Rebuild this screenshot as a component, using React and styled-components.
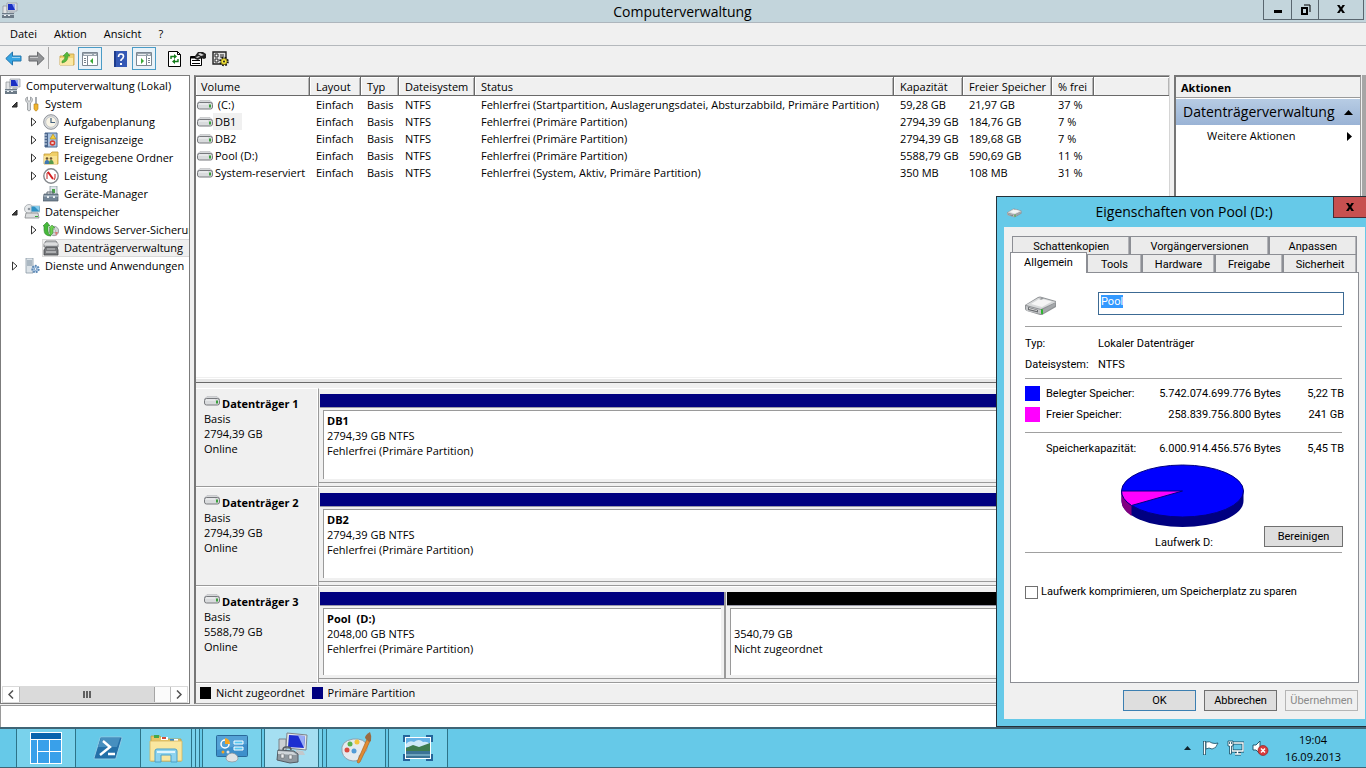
import React, { useEffect, useRef } from "react";
import styled, { createGlobalStyle, css } from "styled-components";

const UI_FONT = '"Open Sans", "Noto Sans", sans-serif';
const DIALOG_FONT = 'Roboto, "Liberation Sans", Arial, sans-serif';

const GlobalStyle = createGlobalStyle`
  *, *::before, *::after { box-sizing: border-box; }
  body { margin: 0; background: #66c9e8; color: #000; font: 11px/18px ${UI_FONT}; }
  button, input { font: inherit; color: inherit; }
  svg { display: block; flex: none; }
`;

/* ---------- frame ---------- */

const Desktop = styled.div`
  position: relative;
  display: flex;
  flex-direction: column;
  min-height: 100vh;
  overflow: hidden;
`;

const PlainButton = styled.button`
  display: flex;
  align-items: center;
  justify-content: center;
  margin: 0;
  padding: 0;
  border: 0;
  background: none;
`;

const TitleBar = styled.header`
  display: flex;
  justify-content: space-between;
  height: 23px;
  padding-left: 2px;
  background: #c3d5dc;
  border-bottom: 1px solid #aeb6bd;
`;

const TitleIcon = styled.span`
  padding-top: 2px;
`;

const WindowTitle = styled.h1`
  flex: 1;
  margin: 0;
  padding-left: 84px;
  text-align: center;
  font-size: 14px;
  line-height: 24px;
  font-weight: 400;
`;

const CaptionButtons = styled.div`
  display: flex;
  height: 20px;
  margin-right: 2px;
  border: 1px solid #59666f;
  border-top: 0;
`;

const CaptionButton = styled(PlainButton)`
  width: ${(p) => (p.$wide ? 45 : 27)}px;
  padding-bottom: 1px;
  & + & { border-left: 1px solid #59666f; }
`;

const MenuBar = styled.nav`
  display: flex;
  gap: 17px;
  height: 23px;
  padding-left: 10px;
  background: #f0f0f0;
  border-bottom: 1px solid #b4b8bc;
`;

const ToolBar = styled.div`
  display: flex;
  align-items: flex-start;
  height: 29px;
  padding: 1px 0 0 2px;
  background: #f0f0f0;
`;

const ToolButton = styled(PlainButton)`
  width: 23px;
  height: 23px;
  ${(p) =>
    p.$on &&
    css`
      background: #e9f2f8;
      border: 1px solid #4a9bc6;
      width: 24px;
    `}
`;

const ToolSeparator = styled.span`
  width: 7px;
  height: 22px;
  border-left: 1px solid ${(p) => (p.$line ? "#a8a8a8" : "transparent")};
`;

const Workspace = styled.main`
  flex: 1;
  display: grid;
  grid-template-columns: 190px minmax(0, 1fr) 192px;
  column-gap: 4px;
  padding-bottom: 1px;
  background: #f0f0f0;
`;

const StatusStrip = styled.div`
  height: 22px;
  background: #fff;
  border-top: 1px solid #9a9a9a;
  border-left: 1px solid #9a9a9a;
`;

/* ---------- tree ---------- */

const TreePane = styled.aside`
  display: flex;
  flex-direction: column;
  min-width: 0;
  background: #fff;
  border: 1px solid #7c7c7c;
  overflow: hidden;
`;

const Tree = styled.ul`
  flex: 1;
  margin: 0;
  padding: 1px 0 0;
  list-style: none;
`;

const TreeRow = styled.li`
  display: flex;
  align-items: center;
  height: 18px;
  padding-left: ${(p) => [4, 8, 27][p.$level]}px;
  white-space: nowrap;
`;

const Toggle = styled(PlainButton)`
  flex: none;
  width: 12px;
  height: 16px;
  margin-right: 3px;
`;

const TreeLabel = styled(PlainButton)`
  flex: 1;
  min-width: 0;
  justify-content: flex-start;
  gap: 5px;
  height: 18px;
  line-height: 18px;
  ${(p) =>
    p.$selected &&
    css`
      background: #efefef;
      border: 1px solid #d9d9d9;
      border-right: 0;
      margin-left: -1px;
    `}
`;

const ScrollBar = styled.div`
  display: flex;
  height: 17px;
  margin: 0 1px;
  border: 1px solid #dadada;
  background: #fbfbfb;
`;

const ScrollEnd = styled(PlainButton)`
  width: 16px;
  background: #fff;
`;

const ScrollTrack = styled.div`
  flex: 1;
  border: solid #bdbdbd;
  border-width: 0 1px;
`;

const ScrollThumb = styled(PlainButton)`
  width: 90%;
  height: 15px;
  background: #dadada;
  border-right: 1px solid #a5a5a5;
`;

/* ---------- volume list ---------- */

const CenterPane = styled.section`
  display: flex;
  flex-direction: column;
  min-width: 0;
  background: #f0f0f0;
  border: 1px solid #9a9a9a;
  border-right-color: #d5d5d5;
  border-left: 2px solid #767676;
`;

const VolumeArea = styled.div`
  height: 301px;
  background: #fff;
  border-top: 1px solid #696969;
`;

const VolumeTable = styled.table`
  width: 100%;
  table-layout: fixed;
  border-collapse: separate;
  border-spacing: 0;
  white-space: nowrap;
  th {
    height: 19px;
    padding: 1px 0 0 6px;
    text-align: left;
    font-weight: 400;
    line-height: 17px;
    background: #f0f0f0;
    border-right: 1px solid #696969;
    border-bottom: 1px solid #696969;
    box-shadow: inset 1px 1px #fff, inset -1px 0 #b5b5b5;
  }
  th:first-child { padding-left: 5px; }
  th:last-child { border-right: 0; }
  td { height: 17px; padding: 0 0 0 6px; line-height: 17px; }
  td:first-child { padding-left: 1px; }
`;

const VolumeName = styled.span`
  display: flex;
  align-items: center;
`;

const NameText = styled.span`
  height: 17px;
  padding: 0 6px 0 2px;
  white-space: pre;
  background: ${(p) => (p.$active ? "#f0f0f0" : "transparent")};
`;

const Splitter = styled.div`
  height: 5px;
  margin-top: 1px;
  border-top: 1px solid #fff;
  border-bottom: 1px solid #696969;
  background: #e6e6e6;
`;

/* ---------- disk map ---------- */

const DiskMap = styled.div`
  flex: 1;
  padding-top: 5px;
`;

const DiskRow = styled.div`
  display: grid;
  grid-template-columns: 122px minmax(0, 1fr);
  height: 99px;
  line-height: 15px;
  &:last-child { height: 97px; }
`;

const DiskInfo = styled.div`
  padding: 7px 0 0 8px;
  border-top: 1px solid #fff;
  border-bottom: 1px solid #9a9a9a;
  border-right: 1px solid #fff;
`;

const DiskTitle = styled.div`
  display: flex;
  gap: 2px;
  font-weight: 700;
`;

const Partitions = styled.div`
  display: grid;
  grid-template-columns: ${(p) => p.$columns};
  border-top: 1px solid #fff;
  border-left: 1px solid #9a9a9a;
  border-bottom: 1px solid #9a9a9a;
  padding: 5px 0 3px;
`;

const Partition = styled.div`
  display: flex;
  flex-direction: column;
  padding-left: 1px;
  border-bottom: 1px solid #9a9a9a;
  & + & { border-left: 2px solid #9a9a9a; }
`;

const PartitionBar = styled.div`
  height: 14px;
  background: ${(p) => (p.$free ? "#000" : "#000080")};
  border-bottom: 1px solid #9a9aa8;
`;

const PartitionBox = styled.div`
  flex: 1;
  margin: 2px 3px 3px 3px;
  padding: 2px 0 0 3px;
  background: #fff;
  border-top: 1px solid #9a9a9a;
  border-left: 1px solid #9a9a9a;
  white-space: pre-line;
  strong { display: block; min-height: 15px; white-space: pre; }
`;

const Legend = styled.div`
  display: flex;
  align-items: center;
  gap: 7px;
  height: 20px;
  padding: 0 0 2px 4px;
  border-top: 1px solid #fff;
`;

const LegendItem = styled.span`
  display: flex;
  align-items: center;
  gap: 5px;
  &::before {
    content: "";
    width: 11px;
    height: 12px;
    background: ${(p) => (p.$free ? "#000" : "#000080")};
  }
`;

/* ---------- actions ---------- */

const ActionsFrame = styled.aside`
  border-right: 4px solid #a6a6a6;
  background: #f0f0f0;
`;

const ActionsPane = styled.div`
  height: 100%;
  margin-right: 1px;
  background: #fff;
  border: 1px solid #9a9a9a;
  border-top: 2px solid #767676;
  border-left: 2px solid #767676;
`;

const ActionsHeading = styled.h2`
  margin: 0;
  height: 21px;
  padding: 2px 0 0 5px;
  background: #f0f0f0;
  border-bottom: 1px solid #9a9a9a;
  font-size: 11px;
  line-height: 18px;
`;

const ActionGroup = styled(PlainButton)`
  width: 100%;
  height: 26px;
  margin-top: 1px;
  justify-content: space-between;
  padding: 0 7px;
  background: linear-gradient(#b7cce4, #9ab3d5);
  font-size: 14px;
`;

const ActionItem = styled(PlainButton)`
  width: 100%;
  height: 24px;
  justify-content: space-between;
  padding: 0 8px 2px 31px;
`;

/* ---------- dialog ---------- */

const Dialog = styled.section`
  position: absolute;
  right: 0;
  bottom: 41px;
  width: 370px;
  padding: 0 1px 7px 7px;
  background: #66c9e8;
  border: 1px solid #24313a;
  border-right: 0;
  font: 11px/14px ${DIALOG_FONT};
`;

const DialogTitle = styled.div`
  display: flex;
  align-items: flex-start;
  height: 30px;
  margin-right: -1px;
  svg { margin: 11px 0 0 3px; }
  h2 {
    flex: 1;
    margin: 0;
    padding-left: 13px;
    text-align: center;
    font: 14px/30px ${UI_FONT};
  }
`;

const CloseButton = styled(PlainButton)`
  width: 33px;
  height: 21px;
  background: #c75050;
  border: 1px solid #4b2a35;
  border-top: 0;
  border-right: 0;
  && svg { margin: 0; }
`;

const DialogBody = styled.div`
  padding: 9px 6px 8px;
  background: #f0f0f0;
`;

const TabRow = styled.div`
  display: grid;
  grid-template-columns: ${(p) => p.$columns};
  height: 18px;
  margin: 0 2px 0 ${(p) => (p.$front ? 0 : 2)}px;
`;

const Tab = styled(PlainButton)`
  position: relative;
  height: 18px;
  padding-top: 2px;
  background: #ebebeb;
  border: 1px solid #8c8e94;
  border-bottom: 0;
  box-shadow: inset -1px 0 #b2b3b7;
  ${(p) =>
    p.$selected &&
    css`
      z-index: 1;
      height: 21px;
      margin-top: -2px;
      padding: 0 0 1px;
      background: #fff;
      box-shadow: none;
    `}
`;

const TabPanel = styled.div`
  height: 411px;
  padding: 19px 14px 0;
  background: #fff;
  border: 1px solid #8c8e94;
`;

const Divider = styled.hr`
  margin: 0 2px 0 0;
  border: 0;
  border-top: 1px solid #a0a0a0;
`;

const NameRow = styled.label`
  display: grid;
  grid-template-columns: 73px 1fr;
  height: 34px;
  svg { margin-top: 4px; }
`;

const NameInput = styled.input`
  height: 23px;
  padding: 0 2px 4px;
  border: 1px solid #3c6a94;
  border-radius: 0;
  outline: 0;
  background: #fff;
  font-size: 11px;
  &::selection { background: #3399ff; color: #fff; }
`;

const Facts = styled.dl`
  display: grid;
  grid-template-columns: 73px 1fr;
  grid-auto-rows: 21px;
  align-items: center;
  margin: 0;
  padding: 6px 0 3px;
  dt, dd { margin: 0; }
`;

const UsageTable = styled.table`
  width: 100%;
  border-collapse: collapse;
  table-layout: fixed;
  margin: ${(p) => (p.$total ? "5px 0 5px" : "4px 0 7px")};
  th, td { height: 21px; padding: 0; font-weight: 400; }
  th { text-align: left; }
  td { text-align: right; white-space: nowrap; }
`;

const Swatch = styled.span`
  display: block;
  width: 15px;
  height: 15px;
  background: ${(p) => p.$color};
`;

const ChartRow = styled.div`
  display: grid;
  grid-template-columns: 95px 128px 1fr;
  align-items: end;
  height: 88px;
  padding: 0 1px 7px 0;
`;

const Chart = styled.figure`
  margin: 0 0 -3px;
  figcaption { margin-top: 8px; text-align: center; }
`;

const PushButton = styled(PlainButton)`
  height: 21px;
  width: ${(p) => p.$width || 73}px;
  background: #dedede;
  border: 1px solid #707070;
  ${(p) => p.$default && "border-color: #3c7fb1;"}
  &:disabled { color: #8a8a8a; background: #f0f0f0; border-color: #b5b5b5; }
`;

const CleanButton = styled(PushButton)`
  justify-self: end;
`;

const CheckLabel = styled.label`
  display: flex;
  align-items: center;
  gap: 3px;
  padding-top: 32px;
  input {
    appearance: none;
    width: 13px;
    height: 13px;
    margin: 0;
    border: 1px solid #707070;
    background: #fff;
  }
`;

const DialogButtons = styled.div`
  display: flex;
  justify-content: flex-end;
  gap: 8px;
  padding: 7px 1px 0 0;
`;

/* ---------- task bar ---------- */

const TaskBar = styled.footer`
  display: flex;
  height: 41px;
  padding-left: 16px;
  background: #66c9e8;
  border-top: 2px solid #3f6576;
  border-bottom: 1px solid #3f6576;
`;

const TaskButton = styled(PlainButton)`
  width: ${(p) => p.$width}px;
  margin-right: ${(p) => p.$after || 0}px;
  border: solid #2d7388;
  border-width: 0 1px;
  background: ${(p) => (p.$active ? "#a5dff2" : p.$plain ? "transparent" : "#79d2ec")};
  & + & { margin-left: -1px; }
  ${(p) =>
    p.$stack &&
    css`
      box-shadow: 3px 0 #79d2ec, 4px 0 #2d7388;
    `}
  ${(p) =>
    p.$stack === 2 &&
    css`
      box-shadow: 3px 0 #79d2ec, 4px 0 #2d7388, 7px 0 #79d2ec, 8px 0 #2d7388;
    `}
`;

const Tray = styled.div`
  display: flex;
  align-items: center;
  gap: 8px;
  margin-left: auto;
  padding-right: 25px;
`;

const TrayArrow = styled.svg`
  margin-right: 4px;
`;

const Clock = styled.time`
  margin-left: 8px;
  line-height: 17px;
  text-align: center;
`;

/* ---------- icons ---------- */

const ComputerIcon = () => (
  <svg width="16" height="16" viewBox="0 0 16 16">
    <path d="M1 4h4v8H1z" fill="#e2e4e6" stroke="#8a8f94" strokeWidth=".7" />
    <path d="M5 1h10v8H5z" fill="#dde1e6" stroke="#949aa2" strokeWidth=".7" />
    <path d="M6 2h7v6H6z" fill="#1a2fc4" />
    <path d="M10 2h3v6z" fill="#8fa2f0" />
    <path d="M8 9h4l1 2H7z" fill="#b7bcc2" />
    <path d="M0 11h12v5H0z" fill="#6d7b88" />
    <path d="M0 12.500h12" stroke="#b9c5cf" />
    <path d="M2 13h2v1H2zM6 13h2v1H6z" fill="#eef2f5" />
  </svg>
);

const DriveIcon = () => (
  <svg width="16" height="10" viewBox="0 0 16 10">
    <path d="M3 .5h10l2.500 2.500H.5z" fill="#d5d7d9" stroke="#b8babd" strokeWidth=".6" />
    <rect x=".5" y="2.500" width="15" height="6.500" rx="2" fill="#d9dbdd" stroke="#77797d" />
    <path d="M2 4h9" stroke="#f4f5f6" />
    <path d="M12 4.500h2v3h-2z" fill="#3aa03c" />
  </svg>
);

const LargeDriveIcon = ({ width = 32, height = 20 }) => (
  <svg width={width} height={height} viewBox="0 0 32 20">
    <path d="M0 9 13 1q2-1 4 0l14 4v6l-14 8h-2L2 15q-2-1-2-2z" fill="#8f9295" />
    <path d="M1 9 13 2q2-1 4 0l14 4-15 7z" fill="#d6d8d9" />
    <path d="M6 8 15 2.500l12 3L17 11z" fill="#f5f5f5" />
    <path d="m14 3 3-1 2 .7-3 1z" fill="#8b8e91" />
    <path d="m1 10 15 4v4L2 15q-1-1-1-2z" fill="#c4c6c8" />
    <path d="m3 11 10 3v2.500L3 14z" fill="#6a6d70" />
    <path d="m4 12 8 2.300v.7L4 13z" fill="#e6e6e6" />
    <path d="m17 14 13-7v3l-13 8z" fill="#a4a7aa" />
    <path d="m16 13 2 .5v5l-2-1z" fill="#2fb52f" />
  </svg>
);

const ToolsIcon = () => (
  <svg width="16" height="16" viewBox="0 0 16 16">
    <path d="M3.500 1v3L5 5.500 6.500 4V1c3 1 2 5 0 6v7q-1.500 2-3 0V7C1.500 6 .5 2 3.500 1z" fill="#d5d8da" stroke="#84888c" strokeWidth=".7" />
    <path d="M11 1h2v7h-2z" fill="#a7abb0" />
    <path d="M10 8h4v5q-2 4-4 0z" fill="#f0b530" stroke="#b57d12" strokeWidth=".6" />
  </svg>
);

const ClockIcon = () => (
  <svg width="16" height="16" viewBox="0 0 16 16">
    <circle cx="8" cy="8" r="7.300" fill="#dcdee0" stroke="#8e9297" />
    <circle cx="8" cy="8" r="5.300" fill="#f8f4e6" stroke="#b5b9be" strokeWidth=".7" />
    <path d="M8 4v4.500h4" fill="none" stroke="#47627e" strokeWidth="1.200" />
  </svg>
);

const EventIcon = () => (
  <svg width="16" height="16" viewBox="0 0 16 16">
    <path d="M2 1h12v14H2z" fill="#a9c3e2" stroke="#4a6a94" />
    <path d="M2 1h3v14H2z" fill="#49658c" />
    <path d="M1 3h3M1 6h3M1 9h3M1 12h3" stroke="#dbe4ef" />
    <path d="m10 2 3 5H7z" fill="#f4cf3c" stroke="#af8a17" strokeWidth=".6" />
    <circle cx="9.500" cy="11" r="2.800" fill="#d43c33" />
    <path d="m8.500 10 2 2m0-2-2 2" stroke="#fff" />
  </svg>
);

const SharedFolderIcon = () => (
  <svg width="16" height="16" viewBox="0 0 16 16">
    <path d="M1 4h6l2-2h6v12H1z" fill="#f0cf68" stroke="#c39a36" strokeWidth=".8" />
    <path d="M1 6h13v8H1z" fill="#f9e394" />
    <circle cx="4" cy="8.500" r="1.300" fill="#6e5636" />
    <circle cx="8" cy="8.500" r="1.300" fill="#6e5636" />
    <path d="M1.500 14q0-4 2.500-4t2.500 4z" fill="#4078b2" />
    <path d="M5.800 14q0-4 2.400-4t2.500 4z" fill="#579a4e" />
  </svg>
);

const PerformanceIcon = () => (
  <svg width="16" height="16" viewBox="0 0 16 16">
    <circle cx="8" cy="8" r="7.200" fill="#fff" stroke="#84888c" strokeWidth="1.400" />
    <path d="M4 11V5l2-1M11 12l1-2V6" fill="none" stroke="#c02222" />
    <path d="m5 4 5 7" stroke="#d51f1f" strokeWidth="2" />
  </svg>
);

const DeviceIcon = () => (
  <svg width="16" height="16" viewBox="0 0 16 16">
    <path d="M7 0h7v9H7z" fill="#dfe6ea" stroke="#7f8c96" strokeWidth=".7" />
    <path d="M9 3h3v4H9z" fill="#49a44a" />
    <path d="M4 8V6h6v2" fill="none" stroke="#616b74" />
    <path d="M1 8h14v7H0z" fill="#738596" stroke="#4c5964" strokeWidth=".7" />
    <path d="M1 10h14" stroke="#c3ced7" />
    <path d="M4 10h2v2H4zM10 10h2v2h-2z" fill="#e9eef1" />
  </svg>
);

const StorageIcon = () => (
  <svg width="16" height="16" viewBox="0 0 16 16">
    <circle cx="5" cy="5" r="4.500" fill="#e6e9eb" stroke="#979ca1" strokeWidth=".7" />
    <circle cx="5" cy="5" r="1.300" fill="#8f979e" />
    <path d="M7 2h9v6H7z" fill="#2e92c5" stroke="#bcc7cd" />
    <path d="m10 2 5 5V2z" fill="#88ccec" />
    <path d="M2 9h12l1 5H1z" fill="#dcdedf" stroke="#838689" strokeWidth=".8" />
    <path d="M11 12h3v1h-3z" fill="#37a637" />
  </svg>
);

const BackupIcon = () => (
  <svg width="16" height="16" viewBox="0 0 16 16">
    <circle cx="11" cy="9" r="4.700" fill="#d1d4d6" stroke="#7f8387" strokeWidth=".7" />
    <circle cx="11" cy="9" r="1.400" fill="#fff" stroke="#777" strokeWidth=".5" />
    <path d="M12 10h3l-2 4z" fill="#d87976" />
    <path d="m4 0 3 4H5v5q0 3 3 5-7 0-7-6V4H0z" fill="#46b93a" stroke="#2d852b" strokeWidth=".6" />
    <path d="m9 3 3 3h-2v4q0 2-3 4V6H6z" fill="#6dcf4f" stroke="#2d852b" strokeWidth=".5" />
  </svg>
);

const DiskManagerIcon = () => (
  <svg width="16" height="16" viewBox="0 0 16 16">
    <path d="M3 1h10l2 3v3H1V4z" fill="#c6c8ca" stroke="#6d6f72" strokeWidth=".8" />
    <path d="M1 4h14" stroke="#f2f2f2" />
    <path d="M3 7h11l1 3v5H1v-5z" fill="#77797c" stroke="#45474a" strokeWidth=".8" />
    <path d="M3 12h10" stroke="#e6e7e8" />
    <path d="M4 9h8" stroke="#c7c8c9" />
  </svg>
);

const ServicesIcon = () => (
  <svg width="16" height="16" viewBox="0 0 16 16">
    <path d="M2 0h7v15H2z" fill="#dce3e8" stroke="#8c9aa6" strokeWidth=".8" />
    <path d="M3 3h5M3 5h5M3 7h5" stroke="#7b8d9d" />
    <circle cx="11.500" cy="11" r="3.200" fill="#b6d0ea" stroke="#5c87b4" strokeWidth="2" strokeDasharray="1.800 1" />
    <circle cx="11.500" cy="11" r="1.300" fill="#fff" stroke="#5c87b4" strokeWidth=".7" />
  </svg>
);

const Arrow = ({ flip, fill, stroke }) => (
  <svg width="17" height="15" viewBox="0 0 17 15">
    <path d="M.8 7.500 7.500 1v4h8.500v5H7.500v4z" transform={flip ? "rotate(180 8.500 7.500)" : undefined} fill={fill} stroke={stroke} />
    <path d="M7 6.500h8" transform={flip ? "translate(-5)" : undefined} stroke="#fff" opacity=".5" />
  </svg>
);

const FolderUpIcon = () => (
  <svg width="16" height="16" viewBox="0 0 16 16">
    <path d="M1 5h7l2-2h5v11H1z" fill="#f1d272" stroke="#c9a548" strokeWidth=".9" />
    <path d="M1 7h13v7H1z" fill="#fbe9a5" />
    <path d="M3 10q3-1 3-5H4l4-4 3 4H9q0 6-6 7z" fill="#54b83b" stroke="#3a8a2a" strokeWidth=".5" />
  </svg>
);

const PaneIcon = ({ right }) => (
  <svg width="16" height="14" viewBox="0 0 16 14">
    <path d="M.5.5h15v13H.5z" fill="#fff" stroke="#7c8791" />
    <path d="M1 1h14v3H1z" fill="#9aa5ae" />
    <path d="M2 2.500h8M12 2.500h2" stroke="#e6eaed" />
    <path d={right ? "M10.500 4v9" : "M5.500 4v9"} stroke="#7c8791" />
    <path d={right ? "M12 6.500h2M12 8.500h2M12 10.500h2" : "M2 6.500h2M2 8.500h2M2 10.500h2"} stroke="#78838c" />
    <path d={right ? "m5 6 3 3-3 3z" : "m11 6-3 3 3 3z"} fill="#39a935" />
  </svg>
);

const HelpIcon = () => (
  <svg width="13" height="16" viewBox="0 0 13 16">
    <path d="M0 0h13v16H0z" fill="#3458b5" />
    <path d="M0 0h2v16H0z" fill="#1e3c8c" />
    <path d="M4.500 6q0-3 2.500-3t2.500 2.500Q9.500 7 7 9v1" fill="none" stroke="#fff" strokeWidth="1.600" />
    <path d="M6 12h2v2H6z" fill="#fff" />
  </svg>
);

const RefreshIcon = () => (
  <svg width="13" height="16" viewBox="0 0 13 16">
    <path d="M.5.5h9l3 3v12H.5z" fill="#fff" stroke="#000" />
    <path d="M9.500.5v3h3" fill="none" stroke="#000" />
    <path d="M3 8V5.500h4M10 8v2.500H6" fill="none" stroke="#137c1a" strokeWidth="1.400" />
    <path d="m6 3 3 2.500L6 8zM7 8l-3 2.500L7 13z" fill="#137c1a" />
  </svg>
);

const PropertiesIcon = () => (
  <svg width="16" height="16" viewBox="0 0 16 16">
    <path d="M.5 5.500h11v9H.5z" fill="#fff" stroke="#000" />
    <path d="M1 6h10v1H1zM2 9.500h8M2 12.500h8" fill="#000" stroke="#000" />
    <path d="M5 5 8 1h5l3 2v4l-2 1-3-1-3 2-3-1z" fill="#222" />
    <path d="m8 3 2-1 4 2-3 1zM6 6l3-1 1 1-3 1z" fill="#d8d8d8" />
  </svg>
);

const SettingsIcon = () => (
  <svg width="17" height="16" viewBox="0 0 17 16">
    <path d="M1 1h13v12H1z" fill="#e2e2e2" stroke="#222" strokeWidth="1.400" />
    <path d="M3 3h3v3H3zM3 8h3v3H3z" fill="#fff" stroke="#222" />
    <path d="M8 4h4M8 6h4" stroke="#222" />
    <circle cx="12" cy="10.500" r="3.800" fill="none" stroke="#111" strokeWidth="2" strokeDasharray="1.600 1.400" />
    <circle cx="12" cy="10.500" r="3" fill="#f3e43c" stroke="#756a00" strokeWidth=".7" />
    <circle cx="12" cy="10.500" r="1" fill="#222" />
  </svg>
);

const StartIcon = () => (
  <svg width="32" height="32" viewBox="0 0 32 32" shapeRendering="crispEdges">
    <path d="M.5.5h31v31H.5z" fill="#39a0ea" stroke="#fff" />
    <path d="M1 1h30v6H1z" fill="#0a64ad" />
    <path d="M1 7.500h30M7.500 8v24M19.500 8v24M8 19.500h24" stroke="#fff" />
  </svg>
);

const ShellIcon = () => (
  <svg width="30" height="24" viewBox="0 0 30 24">
    <path d="M8 1h20q1 0 1 1l-6 20q0 1-1 1H2q-1 0-1-1L7 2q0-1 1-1z" fill="#2470a8" stroke="#8fcbe6" />
    <path d="M8 2h19l-3 9H5z" fill="#5da4cf" opacity=".6" />
    <path d="m10 5 7 6-10 8M15 18h7" fill="none" stroke="#fff" strokeWidth="2.400" />
  </svg>
);

const ExplorerIcon = () => (
  <svg width="34" height="32" viewBox="0 0 34 32">
    <path d="M2 4h9l2 3h19v22H2z" fill="#e8c667" stroke="#b99a42" strokeWidth=".8" />
    <path d="M5 3h5v3H5z" fill="#42a84b" />
    <path d="M12 5h7v3h-7z" fill="#fff" />
    <path d="M13 5h4v2h-4z" fill="#d14d3c" />
    <path d="M21 7h8v3h-8z" fill="#fff" />
    <path d="M21 7h4v2h-4z" fill="#3489c9" />
    <path d="M1 9h32v20H1z" fill="#f9e7a0" stroke="#d4b55d" strokeWidth=".8" />
    <path d="M6 30V19q0-2 2-2h18q2 0 2 2v11h-6v-7H12v7z" fill="#8ed3ee" stroke="#4ba1c9" />
    <path d="M8 20h18" stroke="#dff5fd" strokeWidth="2" />
  </svg>
);

const ControlIcon = () => (
  <svg width="32" height="30" viewBox="0 0 32 30">
    <rect x=".5" y="2.500" width="31" height="21" rx="1" fill="#3d8fcb" stroke="#2a6a9b" />
    <path d="M1 3h30v8L1 17z" fill="#68b2e2" opacity=".55" />
    <circle cx="9" cy="11" r="4" fill="none" stroke="#fff" strokeWidth="1.500" />
    <path d="M9 11V5a6 6 0 0 1 5 6z" fill="#f5a623" />
    <path d="M18 8h9v3h-9zM18 14h9v3h-9z" fill="#55c4f0" stroke="#fff" />
    <circle cx="7" cy="19" r="1.500" fill="#f5a623" />
    <circle cx="12" cy="19" r="1.500" fill="#e0e7ec" />
    <path d="M10 26q0-5 6-6 6 1 6 6-1 3-6 3t-6-3z" fill="#dfe2e4" stroke="#8b9196" strokeWidth=".7" />
  </svg>
);

const ManagementIcon = () => (
  <svg width="32" height="32" viewBox="0 0 32 32">
    <path d="M3 7h7v14H3z" fill="#cbd0d4" stroke="#798087" />
    <path d="m11 1 20 2-1 15-20-2z" fill="#e5e8eb" stroke="#7d838a" />
    <path d="m13 3 16 1-1 12-16-1z" fill="#1c2fd0" />
    <path d="m22 3.600 7 .4-1 12z" fill="#98acf5" />
    <path d="m20 18 7 1 2 4h-9z" fill="#c3c8cc" />
    <path d="M7 18q0-3 3-3h2q3 0 3 3" fill="none" stroke="#545b62" strokeWidth="1.500" />
    <path d="m2 18 16 1 4 3v8l-8 1L1 28z" fill="#8f989f" stroke="#525b63" />
    <path d="m2 19 15 1 4 3-19-1z" fill="#d0d6da" />
    <path d="M5 22h3v4H5zM13 23h3v4h-3z" fill="#eef1f3" stroke="#666" strokeWidth=".5" />
  </svg>
);

const PaintIcon = () => (
  <svg width="32" height="32" viewBox="0 0 32 32">
    <path d="M2 20Q0 9 13 7q12-1 14 7 1 6-5 8-4 1-3 4 0 3-6 3Q4 28 2 20z" fill="#e5eaee" stroke="#8da0ae" />
    <circle cx="7" cy="18" r="2.500" fill="#d84c40" />
    <circle cx="10" cy="12" r="2.500" fill="#56b252" />
    <circle cx="17" cy="10" r="2.500" fill="#f3c53c" />
    <circle cx="14" cy="19" r="2.500" fill="#539cd8" />
    <path d="m27 7 3 2-10 21q-2 2-3 0z" fill="#e18b33" stroke="#a75c18" strokeWidth=".6" />
    <path d="M25 6q0-3 5-6 2 4 1 9l-2 1z" fill="#9b6b41" />
  </svg>
);

const PictureIcon = () => (
  <svg width="30" height="26" viewBox="0 0 30 26">
    <path d="M2 2h26v22H2z" fill="#fff" />
    <path d="M3 3h24v11H3z" fill="#64b2e6" />
    <path d="M3 9q3-4 8-2 5-4 9 0 4-1 7 2v3H3z" fill="#cfe9f8" />
    <path d="m3 13 7-3 6 2 11-4v8H3z" fill="#3f7c4e" />
    <path d="M3 16h24v7H3z" fill="#3b7396" />
    <path d="M3 19h24v2H3z" fill="#6ea3bd" />
    <path d="M1 7V1h6M23 1h6v6M29 19v6h-6M7 25H1v-6" fill="none" stroke="#24659b" strokeWidth="2" />
  </svg>
);

const FlagIcon = () => (
  <svg width="16" height="16" viewBox="0 0 16 16">
    <path d="M1.500 1v14" stroke="#174d63" strokeWidth="3" />
    <path d="M3 2q4-1 6 1 3 1 6 0-2 6-6 6-3-2-6 0z" fill="#fff" stroke="#174d63" strokeWidth=".8" />
    <path d="M1.500 1.500v13" stroke="#fff" strokeWidth="1.400" />
  </svg>
);

const NetworkIcon = () => (
  <svg width="17" height="16" viewBox="0 0 17 16">
    <path d="M5 3h11v8H5zM8 14h6M10.500 11v3" fill="none" stroke="#174d63" strokeWidth="2.800" />
    <path d="M5 3h11v8H5zM8 14h6M10.500 11v3" fill="none" stroke="#fff" strokeWidth="1.400" />
    <path d="M1 1h5v5H4.500v8h-2V6H1z" fill="#fff" stroke="#174d63" strokeWidth=".8" />
    <path d="M2.500 2v2M4.500 2v2" stroke="#174d63" strokeWidth=".8" />
  </svg>
);

const MutedIcon = () => (
  <svg width="17" height="16" viewBox="0 0 17 16">
    <path d="M1 5h3l4-4v13l-4-4H1z" fill="#fff" stroke="#174d63" strokeWidth=".9" />
    <circle cx="11" cy="10.500" r="5" fill="#d93c3c" stroke="#8f2323" strokeWidth=".7" />
    <path d="m9 8.500 4 4m0-4-4 4" stroke="#fff" strokeWidth="1.500" />
  </svg>
);

const Cross = () => (
  <svg width="10" height="10" viewBox="0 0 10 10">
    <path d="M1 1h2.500L5 3.200 6.500 1H9L6.300 5 9 9H6.500L5 6.800 3.500 9H1l2.700-4z" fill="#000" />
  </svg>
);

const UsagePie = () => (
  <svg width="126" height="64" viewBox="0 0 126 64" role="img" aria-label="Speicherbelegung">
    <path d="M1.500 27v10a61 26 0 0 0 122 0V27z" fill="#000080" />
    <path d="M1.500 27v10q0 8 10 15V41z" fill="#800080" />
    <ellipse cx="62.500" cy="27" rx="61" ry="26" fill="#00f" stroke="#000080" />
    <path d="M62.500 27h-61q0 8 10 14.500z" fill="#f0f" stroke="#000080" />
  </svg>
);

/* ---------- content ---------- */

const tree = [
  { level: 0, label: "Computerverwaltung (Lokal)", icon: <ComputerIcon /> },
  { level: 1, label: "System", icon: <ToolsIcon />, toggle: "open" },
  { level: 2, label: "Aufgabenplanung", icon: <ClockIcon />, toggle: "closed" },
  { level: 2, label: "Ereignisanzeige", icon: <EventIcon />, toggle: "closed" },
  { level: 2, label: "Freigegebene Ordner", icon: <SharedFolderIcon />, toggle: "closed" },
  { level: 2, label: "Leistung", icon: <PerformanceIcon />, toggle: "closed" },
  { level: 2, label: "Geräte-Manager", icon: <DeviceIcon /> },
  { level: 1, label: "Datenspeicher", icon: <StorageIcon />, toggle: "open" },
  { level: 2, label: "Windows Server-Sicherung", icon: <BackupIcon />, toggle: "closed" },
  { level: 2, label: "Datenträgerverwaltung", icon: <DiskManagerIcon />, selected: true },
  { level: 1, label: "Dienste und Anwendungen", icon: <ServicesIcon />, toggle: "closed" },
];

const columns = [
  ["Volume", 114],
  ["Layout", 51],
  ["Typ", 38],
  ["Dateisystem", 76],
  ["Status", 419],
  ["Kapazität", 69],
  ["Freier Speicher", 89],
  ["% frei", 42],
  ["", null],
];

const volumes = [
  [" (C:)", "Fehlerfrei (Startpartition, Auslagerungsdatei, Absturzabbild, Primäre Partition)", "59,28 GB", "21,97 GB", "37 %"],
  ["DB1", "Fehlerfrei (Primäre Partition)", "2794,39 GB", "184,76 GB", "7 %"],
  ["DB2", "Fehlerfrei (Primäre Partition)", "2794,39 GB", "189,68 GB", "7 %"],
  ["Pool (D:)", "Fehlerfrei (Primäre Partition)", "5588,79 GB", "590,69 GB", "11 %"],
  ["System-reserviert", "Fehlerfrei (System, Aktiv, Primäre Partition)", "350 MB", "108 MB", "31 %"],
];

const disks = [
  {
    name: "Datenträger 1",
    size: "2794,39 GB",
    columns: "1fr",
    parts: [{ title: "DB1", text: "2794,39 GB NTFS\nFehlerfrei (Primäre Partition)" }],
  },
  {
    name: "Datenträger 2",
    size: "2794,39 GB",
    columns: "1fr",
    parts: [{ title: "DB2", text: "2794,39 GB NTFS\nFehlerfrei (Primäre Partition)" }],
  },
  {
    name: "Datenträger 3",
    size: "5588,79 GB",
    columns: "405px 1fr",
    parts: [
      { title: "Pool  (D:)", text: "2048,00 GB NTFS\nFehlerfrei (Primäre Partition)" },
      { title: "", text: "3540,79 GB\nNicht zugeordnet", free: true },
    ],
  },
];

const TreeToggle = ({ state, label }) => (
  <Toggle aria-label={label} aria-expanded={state === "open"}>
    <svg width="8" height="10" viewBox="0 0 8 10">
      {state === "open" ? (
        <path d="M6 3v5H1z" fill="#404040" stroke="#262626" />
      ) : (
        <path d="M1.500 1v8l4.500-4z" fill="#fff" stroke="#333" />
      )}
    </svg>
  </Toggle>
);

function TreeView() {
  return (
    <TreePane>
      <Tree>
        {tree.map((n) => (
          <TreeRow key={n.label} $level={n.level}>
            {n.level > 0 && (n.toggle ? <TreeToggle state={n.toggle} label={n.label} /> : <Toggle as="span" />)}
            <TreeLabel $selected={n.selected}>
              {n.icon}
              {n.label}
            </TreeLabel>
          </TreeRow>
        ))}
      </Tree>
      <ScrollBar>
        <ScrollEnd aria-label="Nach links">
          <svg width="6" height="9" viewBox="0 0 6 9"><path d="M5 .5 1 4.500l4 4" fill="none" stroke="#505050" strokeWidth="1.500" /></svg>
        </ScrollEnd>
        <ScrollTrack>
          <ScrollThumb aria-label="Bildlauf">
            <svg width="8" height="7" viewBox="0 0 8 7"><path d="M1 0v7M4 0v7M7 0v7" stroke="#606060" strokeWidth="2" /></svg>
          </ScrollThumb>
        </ScrollTrack>
        <ScrollEnd aria-label="Nach rechts">
          <svg width="6" height="9" viewBox="0 0 6 9"><path d="m1 .5 4 4-4 4" fill="none" stroke="#505050" strokeWidth="1.500" /></svg>
        </ScrollEnd>
      </ScrollBar>
    </TreePane>
  );
}

function VolumeList() {
  return (
    <VolumeArea>
      <VolumeTable>
        <colgroup>
          {columns.map(([name, width]) => (
            <col key={name} width={width || undefined} />
          ))}
        </colgroup>
        <thead>
          <tr>{columns.map(([name]) => <th key={name} scope="col">{name}</th>)}</tr>
        </thead>
        <tbody>
          {volumes.map(([name, status, size, free, percent]) => (
            <tr key={name}>
              <td>
                <VolumeName>
                  <DriveIcon />
                  <NameText $active={name === "DB1"}>{name}</NameText>
                </VolumeName>
              </td>
              <td>Einfach</td>
              <td>Basis</td>
              <td>NTFS</td>
              <td>{status}</td>
              <td>{size}</td>
              <td>{free}</td>
              <td>{percent}</td>
              <td />
            </tr>
          ))}
        </tbody>
      </VolumeTable>
    </VolumeArea>
  );
}

function Disks() {
  return (
    <>
      <DiskMap>
        {disks.map((d) => (
          <DiskRow key={d.name}>
            <DiskInfo>
              <DiskTitle><DriveIcon />{d.name}</DiskTitle>
              <div>Basis</div>
              <div>{d.size}</div>
              <div>Online</div>
            </DiskInfo>
            <Partitions $columns={d.columns}>
              {d.parts.map((p) => (
                <Partition key={p.text}>
                  <PartitionBar $free={p.free} />
                  <PartitionBox><strong>{p.title}</strong>{p.text}</PartitionBox>
                </Partition>
              ))}
            </Partitions>
          </DiskRow>
        ))}
      </DiskMap>
      <Legend>
        <LegendItem $free>Nicht zugeordnet</LegendItem>
        <LegendItem>Primäre Partition</LegendItem>
      </Legend>
    </>
  );
}

function PropertiesDialog() {
  const nameRef = useRef(null);
  useEffect(() => {
    nameRef.current.focus({ preventScroll: true });
    nameRef.current.select();
  }, []);

  return (
    <Dialog role="dialog" aria-label="Eigenschaften von Pool (D:)">
      <DialogTitle>
        <LargeDriveIcon width={15} height={10} />
        <h2>Eigenschaften von Pool (D:)</h2>
        <CloseButton aria-label="Schließen"><Cross /></CloseButton>
      </DialogTitle>
      <DialogBody>
        <TabRow $columns="118fr 138fr 88fr">
          <Tab>Schattenkopien</Tab>
          <Tab>Vorgängerversionen</Tab>
          <Tab>Anpassen</Tab>
        </TabRow>
        <TabRow $front $columns="77fr 55fr 73fr 68fr 74fr">
          <Tab $selected>Allgemein</Tab>
          <Tab>Tools</Tab>
          <Tab>Hardware</Tab>
          <Tab>Freigabe</Tab>
          <Tab>Sicherheit</Tab>
        </TabRow>
        <TabPanel>
          <NameRow>
            <LargeDriveIcon />
            <NameInput ref={nameRef} defaultValue="Pool" aria-label="Name" />
          </NameRow>
          <Divider />
          <Facts>
            <dt>Typ:</dt>
            <dd>Lokaler Datenträger</dd>
            <dt>Dateisystem:</dt>
            <dd>NTFS</dd>
          </Facts>
          <Divider />
          <UsageTable>
            <colgroup><col width="21" /><col width="100" /><col /><col width="63" /></colgroup>
            <tbody>
              <tr>
                <td><Swatch $color="#00f" /></td>
                <th scope="row">Belegter Speicher:</th>
                <td>5.742.074.699.776 Bytes</td>
                <td>5,22 TB</td>
              </tr>
              <tr>
                <td><Swatch $color="#f0f" /></td>
                <th scope="row">Freier Speicher:</th>
                <td>258.839.756.800 Bytes</td>
                <td>241 GB</td>
              </tr>
            </tbody>
          </UsageTable>
          <Divider />
          <UsageTable $total>
            <colgroup><col width="21" /><col width="100" /><col /><col width="63" /></colgroup>
            <tbody>
              <tr>
                <td />
                <th scope="row">Speicherkapazität:</th>
                <td>6.000.914.456.576 Bytes</td>
                <td>5,45 TB</td>
              </tr>
            </tbody>
          </UsageTable>
          <ChartRow>
            <span />
            <Chart>
              <UsagePie />
              <figcaption>Laufwerk D:</figcaption>
            </Chart>
            <CleanButton $width={79}>Bereinigen</CleanButton>
          </ChartRow>
          <Divider />
          <CheckLabel>
            <input type="checkbox" />
            Laufwerk komprimieren, um Speicherplatz zu sparen
          </CheckLabel>
        </TabPanel>
        <DialogButtons>
          <PushButton $default>OK</PushButton>
          <PushButton>Abbrechen</PushButton>
          <PushButton disabled>Übernehmen</PushButton>
        </DialogButtons>
      </DialogBody>
    </Dialog>
  );
}

export default function App() {
  return (
    <Desktop>
      <GlobalStyle />
      <TitleBar>
        <TitleIcon><ComputerIcon /></TitleIcon>
        <WindowTitle>Computerverwaltung</WindowTitle>
        <CaptionButtons>
          <CaptionButton aria-label="Minimieren">
            <svg width="10" height="10" viewBox="0 0 10 10"><path d="M1 6h8v3H1z" /></svg>
          </CaptionButton>
          <CaptionButton aria-label="Wiederherstellen">
            <svg width="11" height="11" viewBox="0 0 11 11"><path d="M4 1h6v7" fill="none" stroke="#000" /><path d="M2 4h5v6H2z" fill="none" stroke="#000" strokeWidth="2" /></svg>
          </CaptionButton>
          <CaptionButton $wide aria-label="Schließen"><Cross /></CaptionButton>
        </CaptionButtons>
      </TitleBar>
      <MenuBar>
        <PlainButton>Datei</PlainButton>
        <PlainButton>Aktion</PlainButton>
        <PlainButton>Ansicht</PlainButton>
        <PlainButton>?</PlainButton>
      </MenuBar>
      <ToolBar>
        <ToolButton aria-label="Zurück"><Arrow fill="#35a4e2" stroke="#2476ac" /></ToolButton>
        <ToolButton aria-label="Vorwärts"><Arrow flip fill="#929497" stroke="#696b6e" /></ToolButton>
        <ToolSeparator $line />
        <ToolButton aria-label="Eine Ebene höher"><FolderUpIcon /></ToolButton>
        <ToolButton $on aria-label="Konsolenstruktur"><PaneIcon /></ToolButton>
        <ToolSeparator />
        <ToolButton aria-label="Hilfe"><HelpIcon /></ToolButton>
        <ToolButton $on aria-label="Aktionsbereich"><PaneIcon right /></ToolButton>
        <ToolSeparator />
        <ToolButton aria-label="Aktualisieren"><RefreshIcon /></ToolButton>
        <ToolButton aria-label="Eigenschaften"><PropertiesIcon /></ToolButton>
        <ToolButton aria-label="Einstellungen"><SettingsIcon /></ToolButton>
      </ToolBar>
      <Workspace>
        <TreeView />
        <CenterPane>
          <VolumeList />
          <Splitter />
          <Disks />
        </CenterPane>
        <ActionsFrame>
          <ActionsPane>
            <ActionsHeading>Aktionen</ActionsHeading>
            <ActionGroup>
              Datenträgerverwaltung
              <svg width="9" height="5" viewBox="0 0 9 5"><path d="M0 5 4.500 0 9 5z" /></svg>
            </ActionGroup>
            <ActionItem>
              Weitere Aktionen
              <svg width="5" height="9" viewBox="0 0 5 9"><path d="m0 0 5 4.500L0 9z" /></svg>
            </ActionItem>
          </ActionsPane>
        </ActionsFrame>
      </Workspace>
      <StatusStrip />
      <TaskBar>
        <TaskButton $width={60} aria-label="Start"><StartIcon /></TaskButton>
        <TaskButton $width={66} $plain aria-label="PowerShell"><ShellIcon /></TaskButton>
        <TaskButton $width={52} $stack={2} $after={11} aria-label="Explorer"><ExplorerIcon /></TaskButton>
        <TaskButton $width={60} $after={3} aria-label="Systemsteuerung"><ControlIcon /></TaskButton>
        <TaskButton $width={55} $active $stack={1} $after={8} aria-label="Computerverwaltung"><ManagementIcon /></TaskButton>
        <TaskButton $width={60} $after={3} aria-label="Paint"><PaintIcon /></TaskButton>
        <TaskButton $width={60} aria-label="Bilder"><PictureIcon /></TaskButton>
        <Tray>
          <TrayArrow width="7" height="4" viewBox="0 0 7 4"><path d="M0 4 3.500 0 7 4z" fill="#10242d" /></TrayArrow>
          <FlagIcon />
          <NetworkIcon />
          <MutedIcon />
          <Clock>19:04<br />16.09.2013</Clock>
        </Tray>
      </TaskBar>
      <PropertiesDialog />
    </Desktop>
  );
}
